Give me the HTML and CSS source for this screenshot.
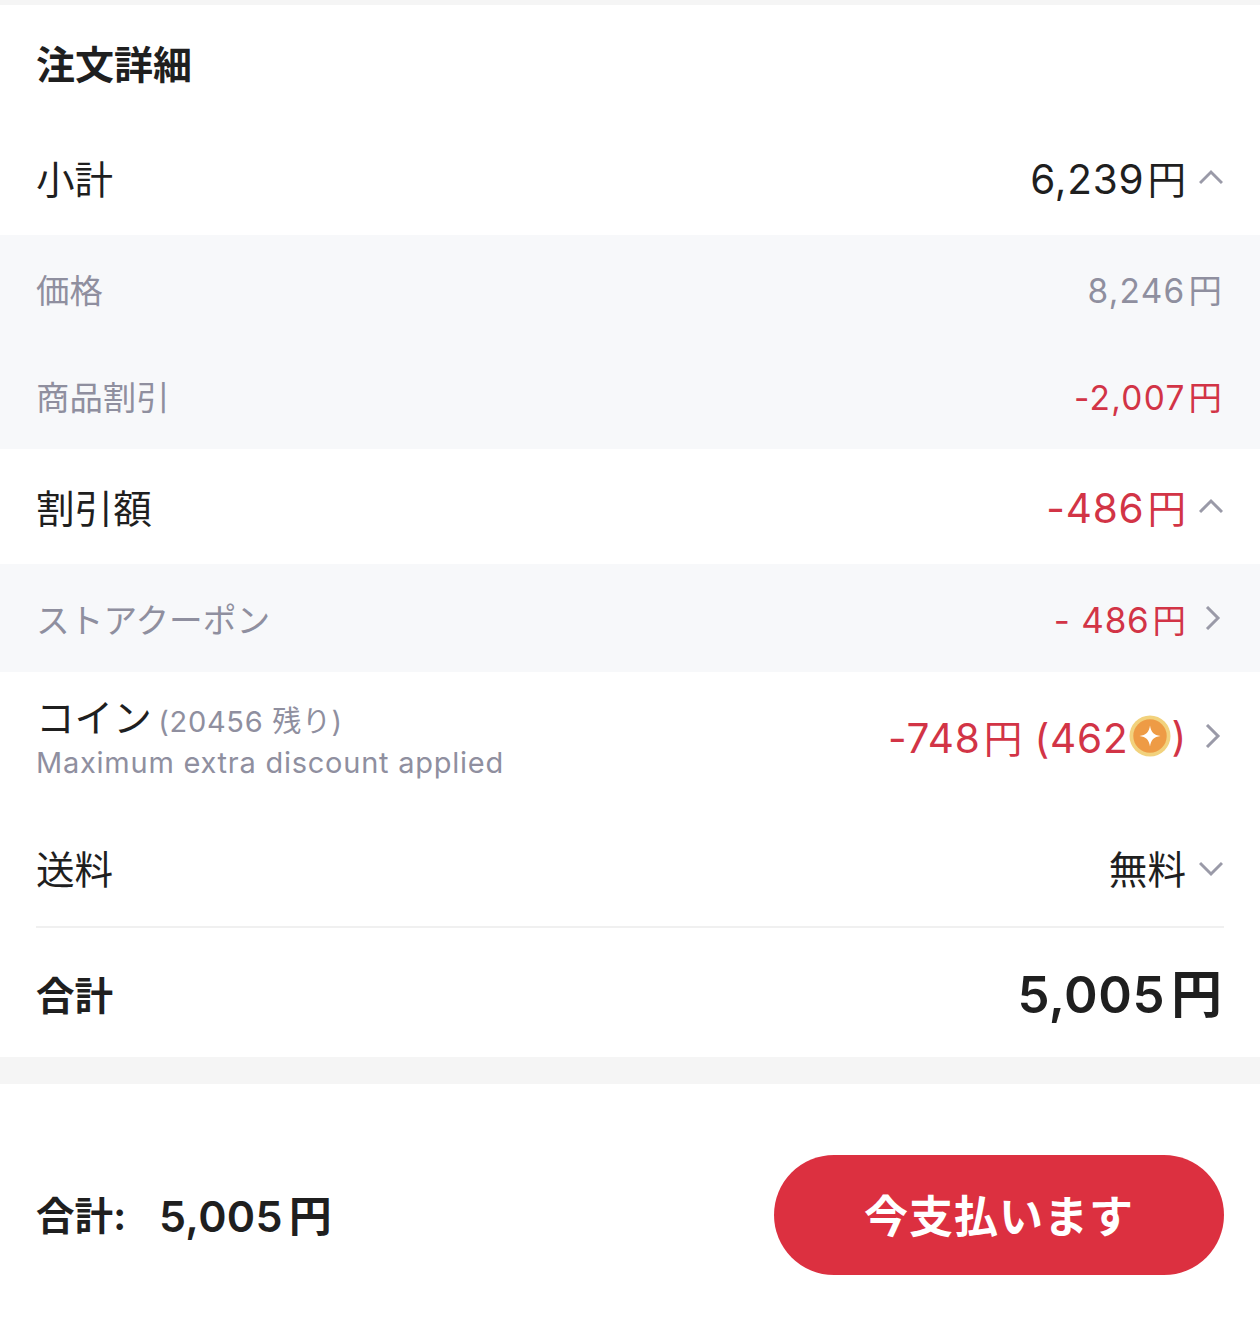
FILE: index.html
```html
<!DOCTYPE html>
<html lang="ja">
<head>
<meta charset="utf-8">
<title>注文詳細</title>
<link rel="stylesheet" href="styles.css">
</head>
<body>
<main class="page">
  <section class="details">
    <h2 class="title">注文詳細</h2>
    <div class="row main sub">
      <span>小計</span>
      <span class="val"><span class="num">6,239<span class="yen">円</span></span><svg class="chev" viewBox="0 0 24 24"><path d="M1 17 12 6l11 11"/></svg></span>
    </div>
    <div class="group">
      <div class="row minor"><span>価格</span><span class="amt">8,246<span class="yen">円</span></span></div>
      <div class="row minor"><span>商品割引</span><span class="amt red">-2,007<span class="yen">円</span></span></div>
    </div>
    <div class="row main disc">
      <span>割引額</span>
      <span class="val red"><span class="num">-486<span class="yen">円</span></span><svg class="chev" viewBox="0 0 24 24"><path d="M1 17 12 6l11 11"/></svg></span>
    </div>
    <div class="group">
      <div class="row minor coupon">
        <span>ストアクーポン</span>
        <span class="val red"><span class="num-small">- 486<span class="yen">円</span></span><svg class="chev side" viewBox="0 0 24 24"><path d="M7 1l11 11L7 23"/></svg></span>
      </div>
    </div>
    <div class="row coin">
      <div class="coin-label">
        <div class="coin-top"><span class="coin-name">コイン</span> <span class="coin-left">(20456 残り)</span></div>
        <div class="coin-note">Maximum extra discount applied</div>
      </div>
      <span class="val red coin-val"><span class="num">-748<span class="yen">円</span> (462</span><svg class="coin-icon" viewBox="0 0 44 44"><circle cx="22" cy="22" r="21.5" fill="#f2d27d"/><circle cx="22" cy="22" r="17.5" fill="#ee9b45"/><path d="M22 11c1 7 4 10 11 11-7 1-10 4-11 11-1-7-4-10-11-11 7-1 10-4 11-11z" fill="#fff"/></svg><span class="num">)</span><svg class="chev side" viewBox="0 0 24 24"><path d="M7 1l11 11L7 23"/></svg></span>
    </div>
    <div class="row main ship">
      <span>送料</span>
      <span class="val"><span>無料</span><svg class="chev" viewBox="0 0 24 24"><path d="M1 7l11 11L23 7"/></svg></span>
    </div>
    <div class="row total">
      <span>合計</span>
      <span class="total-val">5,005<span class="yen">円</span></span>
    </div>
  </section>
  <footer class="bar">
    <div class="bar-total"><span>合計:</span><span class="bar-val">5,005<span class="yen">円</span></span></div>
    <button class="pay" type="button">今支払います</button>
  </footer>
</main>
</body>
</html>
```
FILE: styles.css
```css
* { box-sizing: border-box; }
html, body { margin: 0; padding: 0; background: #fff; }
body {
  font-family: Inter, "Noto Sans CJK JP", sans-serif;
  color: #1f1f1f;
}
.page { width: 1260px; height: 1326px; display: flex; flex-direction: column; background: #f5f5f5; padding-top: 5px; }
.details { background: #fff; height: 1052px; display: flex; flex-direction: column; }
.title { margin: 0; height: 120px; padding: 0 36px 2px; display: flex; align-items: center; font-size: 39px; font-weight: 700; line-height: 1; }
.row { display: flex; justify-content: space-between; align-items: center; padding: 0 36px; }
.main { font-size: 38.6px; }
.sub { height: 110px; padding-bottom: 6px; }
.disc { height: 115px; padding-bottom: 2px; }
.ship { height: 118px; }
.val { display: flex; align-items: center; }
.num { font-size: 40.5px; letter-spacing: 0.8px; }
.num .yen { font-size: 38.6px; }
.num-small { font-size: 35px; letter-spacing: 0.8px; }
.num-small .yen { font-size: 33.4px; }
.yen { margin-left: 3px; letter-spacing: 0; }
.chev { width: 24px; height: 24px; margin: 2px 1px 0 13px; fill: none; stroke: #9a9aa8; stroke-width: 3; }
.chev.side { margin: 0 0 0 13px; }
.num-small + .chev.side { margin-left: 14px; }
.group { background: #f7f8fa; }
.minor { height: 107px; font-size: 33.4px; color: #8f8f9f; }
.amt { letter-spacing: 1.3px; padding-right: 2px; }
.coupon { height: 108px; font-size: 33.7px; }
.red { color: #d23446; }
.coin { height: 136px; padding-bottom: 2px; }
.coin-top { line-height: 40px; }
.coin-name { font-size: 38.6px; }
.coin-left { font-size: 29px; color: #8f8f9f; letter-spacing: 0.7px; margin-left: 2px; }
.coin-note { font-size: 29px; line-height: 34px; color: #8f8f9f; letter-spacing: 0.75px; }
.coin-val { margin-bottom: 6px; }
.coin-icon { width: 42px; height: 42px; margin-left: 1px; }
.total { margin: 0 36px; padding: 0; height: 131px; border-top: 2px solid #f0f0f0; font-size: 38.6px; font-weight: 700; }
.total-val { font-size: 51px; font-weight: 600; padding: 0 2px 4px 0; letter-spacing: 0.5px; }
.total-val .yen { margin-left: 6px; }
.bar { margin-top: 27px; flex: 1; background: #fff; display: flex; justify-content: space-between; align-items: center; padding: 20px 36px 0; }
.bar-total { display: flex; gap: 33px; align-items: center; font-size: 38.6px; font-weight: 700; padding-bottom: 4px; }
.bar-val { font-size: 43px; font-weight: 600; letter-spacing: 0.3px; }
.bar-val .yen { margin-left: 6px; }
.pay { width: 450px; height: 120px; border: 0; border-radius: 60px; background: #dc3040; color: #fff; font: 600 44px Inter, "Noto Sans CJK JP", sans-serif; letter-spacing: 1px; padding-bottom: 4px; }
```
